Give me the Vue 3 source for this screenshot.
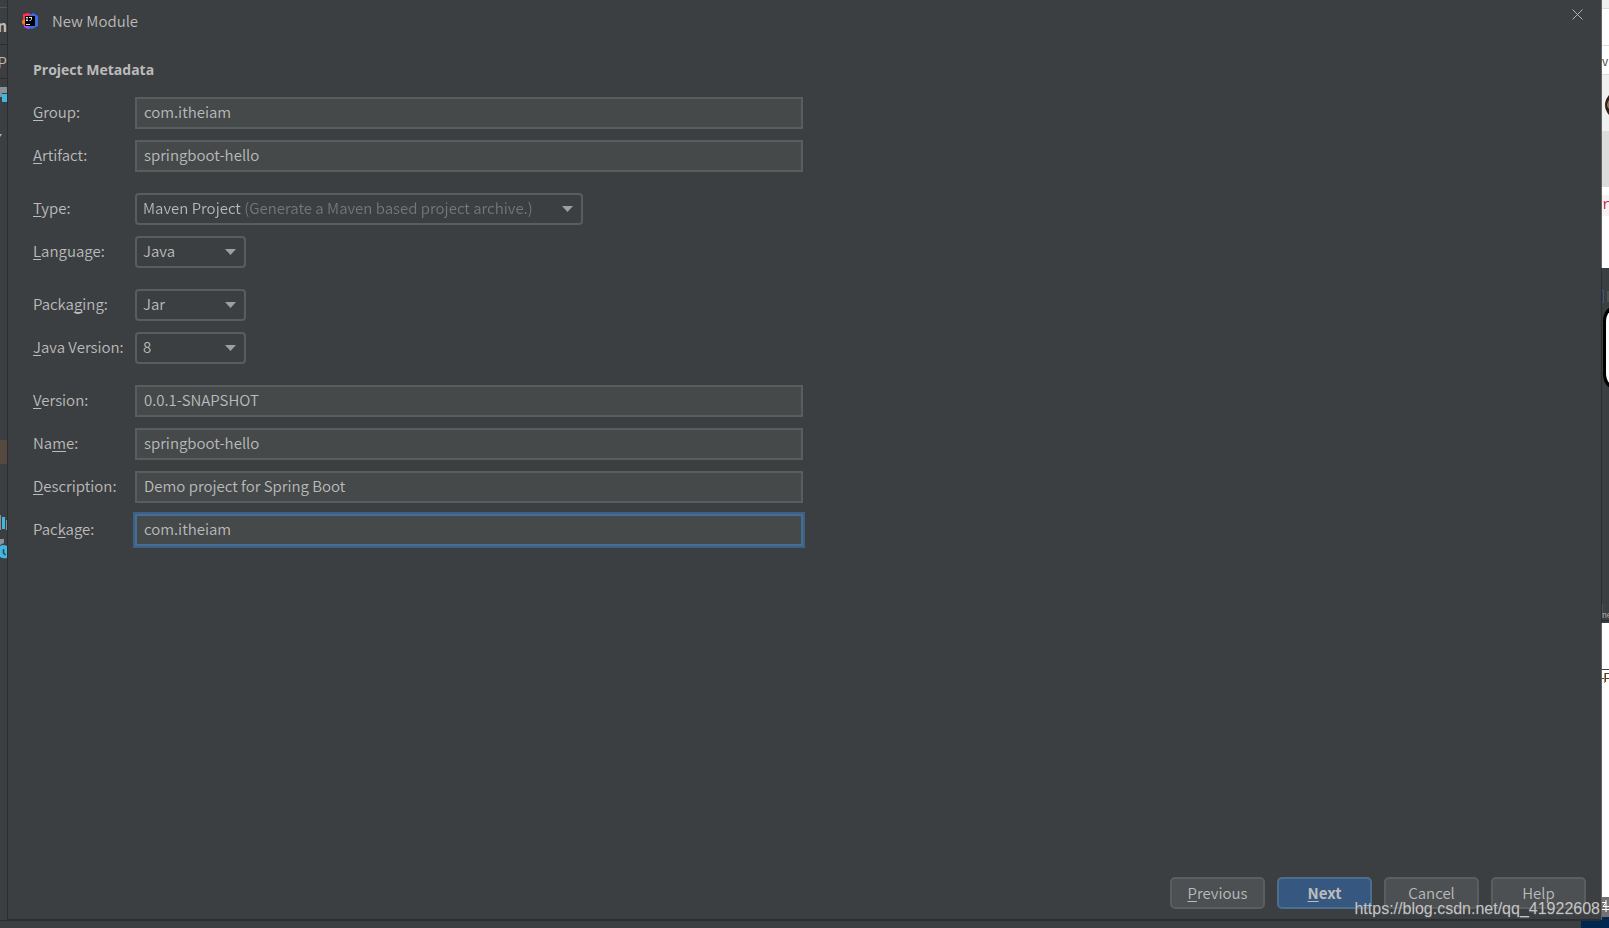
<script setup>
import { reactive } from 'vue'

const groups = reactive([
  [
    { id: 'group', pre: '', key: 'G', post: 'roup:', kind: 'text', value: 'com.itheiam' },
    { id: 'artifact', pre: '', key: 'A', post: 'rtifact:', kind: 'text', value: 'springboot-hello' },
  ],
  [
    { id: 'type', pre: '', key: 'T', post: 'ype:', kind: 'select', wide: true, value: 'Maven Project (Generate a Maven based project archive.)' },
    { id: 'language', pre: '', key: 'L', post: 'anguage:', kind: 'select', value: 'Java' },
  ],
  [
    { id: 'packaging', pre: 'Packa', key: 'g', post: 'ing:', kind: 'select', value: 'Jar' },
    { id: 'java', pre: '', key: 'J', post: 'ava Version:', kind: 'select', value: '8' },
  ],
  [
    { id: 'version', pre: '', key: 'V', post: 'ersion:', kind: 'text', value: '0.0.1-SNAPSHOT' },
    { id: 'name', pre: 'Na', key: 'm', post: 'e:', kind: 'text', value: 'springboot-hello' },
    { id: 'description', pre: '', key: 'D', post: 'escription:', kind: 'text', value: 'Demo project for Spring Boot' },
    { id: 'package', pre: 'Pac', key: 'k', post: 'age:', kind: 'text', active: true, value: 'com.itheiam' },
  ],
])
</script>

<template>
  <div class="desktop">
    <div class="left-edge">
      <div class="l-top"></div>
      <div class="l-nav"><b>n</b></div>
      <div class="l-tab"><span>P</span></div>
      <svg class="l-icons" width="7" height="510" viewBox="0 0 7 510" aria-hidden="true">
        <path d="M0 8h7v6H2v4H0z" fill="#87939a" />
        <path d="M2 15h5v8H2z" fill="#40b6e0" />
        <path d="M0 55l2 0-2 3z" fill="#afb1b3" />
        <path d="M0 361h7v24H0z" fill="#544b3e" />
        <path d="M0 436h1v15H0zM6 441h1v10H6z" fill="#87939a" />
        <path d="M2 438h3v12H2z" fill="#40b6e0" />
        <path d="M0 460h4v4l-4 2z" fill="#87939a" />
        <path d="M0 467q3-2 7 0v12q-4 1-7-1z" fill="#40b6e0" />
        <path d="M3.500 470v4l2 2" fill="none" stroke="#31434d" stroke-width="1.5" />
      </svg>
    </div>

    <main class="dialog">
      <header class="titlebar">
        <svg class="logo" width="16" height="16" viewBox="0 0 16 16" aria-hidden="true">
          <path d="M1 1l6-1 5 5-5 9-5-2-2-3 1-3z" fill="#fe315d" />
          <path d="M0 8l3-2 3 5-3 2-3-3z" fill="#f97a12" />
          <path d="M2 11l5-1 2 5-3 1-4-2z" fill="#b74af7" />
          <path d="M8 2l3-2 5 3v10l-6 3-4-2z" fill="#3b6ceb" />
          <path d="M3 3h10v10H3z" fill="#000" />
          <path d="M4 4.500h2M5 4.500v3M4 7.500h2M7 4.500h3M9.500 4.500v2q0 1-2 1M4 11.500h4" fill="none" stroke="#ddd" />
        </svg>
        <h1>New Module</h1>
        <button class="close" type="button" aria-label="Close">
          <svg width="11" height="11" viewBox="0 0 11 11"><path d="M.5.5l10 10M10.500.5l-10 10" stroke="#afb1b3" fill="none" /></svg>
        </button>
      </header>

      <form class="form" @submit.prevent>
        <h2>Project Metadata</h2>
        <div v-for="(group, i) in groups" :key="i" class="group">
          <div v-for="f in group" :key="f.id" class="row">
            <label :for="f.id">{{ f.pre }}<u>{{ f.key }}</u>{{ f.post }}</label>
            <input v-if="f.kind === 'text'" :id="f.id" v-model="f.value" type="text" :class="{ active: f.active }" />
            <div v-else class="combo" :class="{ wide: f.wide }">
              <select :id="f.id" v-model="f.value">
                <option :value="f.value">{{ f.value }}</option>
              </select>
              <svg width="11" height="6" viewBox="0 0 11 6" aria-hidden="true"><path d="M0 0h11L5.500 6z" fill="#9da0a2" /></svg>
            </div>
          </div>
        </div>
      </form>

      <footer class="actions">
        <button type="button"><u>P</u>revious</button>
        <button type="button" class="primary"><u>N</u>ext</button>
        <button type="button">Cancel</button>
        <button type="button">Help</button>
      </footer>
    </main>

    <div class="right-edge">
      <svg width="8" height="928" viewBox="0 0 8 928" aria-hidden="true">
        <path d="M0 0h8v928H0z" fill="#fff" />
        <path d="M0 0h8v8H0zM0 75h8v56H0z" fill="#f0f0f0" />
        <path d="M0 8h8v1H0zM0 45h8v1H0zM0 74h8v1H0zM0 131h8v56H0z" fill="#dcdcdc" />
        <path d="M8 95q-8 10 0 20z" fill="#30201c" />
        <path d="M8 100q-4 5 0 9z" fill="#947864" />
        <path d="M0 195h8v21H0z" fill="#f9f2f4" />
        <path d="M0 268h8v355H0z" fill="#3c3f41" />
        <path d="M0 290.500h2.500v12H0" fill="none" stroke="#375a88" />
        <path d="M6 291h2v11H6z" fill="#505355" />
        <path d="M9 307q-7 4-7 14v53q0 10 7 14z" fill="#000" />
        <path d="M9 311q-4 4-4 11v51q0 7 4 11z" fill="#fff" />
        <path d="M0 604h2v14H0z" fill="#505355" />
        <path d="M0 620h8v1H0z" fill="#292b2d" />
        <path d="M0 669.500h8M3 673.500h5M0 678.500h8M4.500 673v9" fill="none" stroke="#444" />
        <path d="M3.500 673v10" stroke="#d58b3d" />
        <path d="M0 897h8v20H0z" fill="#727272" />
        <path d="M0 902.500h5l-3 4h6M0 909.500h8M5 900v12" fill="none" stroke="#fff" />
        <path d="M0 917h8v11H0z" fill="#002850" />
        <path d="M0 0h1v920H0z" fill="#606364" />
        <path d="M0 268h1v355H0z" fill="#2b2d2e" />
      </svg>
      <span class="peek peek-v">v</span>
      <span class="peek peek-r">r</span>
      <span class="peek peek-ne">ne</span>
    </div>

    <div class="taskbar"><i></i></div>
    <div class="watermark">https://blog.csdn.net/qq_41922608</div>
  </div>
</template>

<style>
html,
body {
  background: #3c3f41;
}
</style>

<style scoped>
* {
  box-sizing: border-box;
}
.desktop {
  position: relative;
  display: grid;
  grid-template-columns: 8px minmax(0, 1fr) 8px;
  grid-template-rows: 1fr 8px;
  min-height: 100vh;
  overflow: hidden;
  background: #3c3f41;
  color: #bbb;
  font-family: "Noto Sans CJK SC", "Open Sans", sans-serif;
  font-size: 15px;
  font-weight: 350;
  line-height: 20px;
}
.left-edge {
  display: flex;
  flex-direction: column;
  overflow: hidden;
  border-right: 1px solid #2b2d2e;
}
.l-icons {
  flex: none;
}
.l-top {
  height: 8px;
  border-bottom: 1px solid #555;
}
.l-nav,
.l-tab {
  display: flex;
  align-items: center;
  justify-content: flex-end;
  border-bottom: 1px solid #2b2d2e;
}
.l-nav {
  height: 37px;
}
.l-nav b {
  font-weight: 700;
}
.l-tab {
  height: 34px;
}
.dialog {
  display: flex;
  flex-direction: column;
  border-bottom: 1px solid #2b2d2e;
}
.titlebar {
  display: flex;
  align-items: center;
  height: 42px;
  padding: 0 18px 0 14px;
}
.titlebar h1 {
  flex: 1;
  margin: 0 0 0 14px;
  font-size: 15px;
  font-weight: 350;
}
.close {
  display: flex;
  align-self: flex-start;
  margin-top: 9px;
  padding: 0;
  border: 0;
  background: none;
}
.form {
  flex: 1;
  padding: 18px 25px 0;
}
.form h2 {
  margin: 0 0 17px;
  font-family: "Open Sans", sans-serif;
  font-size: 14px;
  font-weight: 700;
  line-height: 20px;
}
.group {
  display: flex;
  flex-direction: column;
  gap: 11px;
  margin-bottom: 21px;
}
.row {
  display: grid;
  grid-template-columns: 102px minmax(0, 668px);
  align-items: center;
}
.row label {
  padding-bottom: 2px;
}
u {
  text-decoration-thickness: 1px;
  text-underline-offset: 2px;
  text-decoration-skip-ink: none;
}
input {
  width: 100%;
  height: 32px;
  padding: 0 7px 3px;
  border: 2px solid #5a5d5e;
  background: #45494a;
  color: #bbb;
  font: inherit;
  outline: none;
}
input.active {
  border-color: #466d94;
  box-shadow: 0 0 0 2px #3d6185;
}
.combo {
  display: flex;
  align-items: center;
  width: 111px;
  height: 32px;
  padding-right: 8px;
  border: 2px solid #5a5d5e;
  border-radius: 4px;
}
.combo.wide {
  width: 448px;
}
.combo select {
  flex: 1;
  min-width: 0;
  height: 28px;
  padding: 0 0 2px 6px;
  border: 0;
  appearance: none;
  background: none;
  color: #bbb;
  font: inherit;
  outline: none;
}
.combo.wide select {
  background: linear-gradient(90deg, #bbb 104px, #777 104px);
  background-clip: text;
  -webkit-background-clip: text;
  color: transparent;
}
.actions {
  display: flex;
  justify-content: flex-end;
  gap: 12px;
  padding: 0 15px 10px;
}
.actions button {
  width: 95px;
  height: 32px;
  padding: 0;
  border: 2px solid #5a5e5f;
  border-radius: 5px;
  background: #4c5052;
  color: #bbb;
  font: inherit;
}
.actions .primary {
  border-color: #4c708c;
  background: #365880;
  font-weight: 700;
}
.right-edge {
  position: relative;
  grid-row: 1 / 3;
  grid-column: 3;
  overflow: hidden;
}
.right-edge svg {
  display: block;
}
.peek {
  position: absolute;
  left: 1px;
  font-size: 12px;
  line-height: 16px;
}
.peek-v {
  top: 53px;
  color: #333;
}
.peek-r {
  top: 197px;
  color: #c7254e;
  font-family: "Liberation Mono", monospace;
  font-size: 14px;
}
.peek-ne {
  top: 607px;
  font-size: 8px;
}
.taskbar {
  display: flex;
  grid-column: 1 / 3;
  grid-row: 2;
  justify-content: flex-end;
  border-top: 1px solid #2b2d2e;
}
.taskbar i {
  width: 20px;
  background: #002850;
}
.watermark {
  position: absolute;
  right: 9px;
  bottom: 9px;
  color: #c4c5c6;
  font-family: "Liberation Sans", Arial, sans-serif;
  font-size: 16px;
  font-weight: 400;
  text-shadow: 0 1px 1px #555;
}
</style>
